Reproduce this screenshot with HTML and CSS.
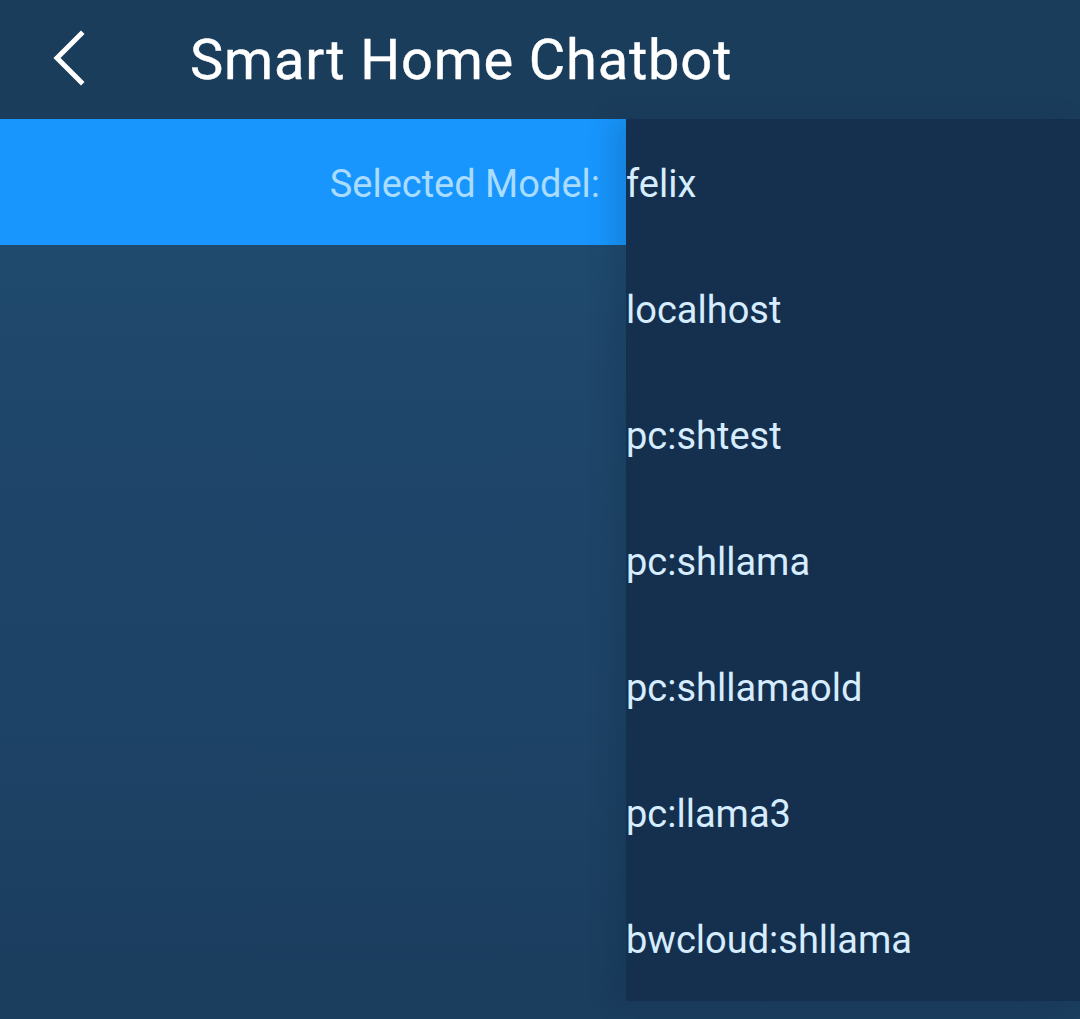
FILE: index.html
```html
<!DOCTYPE html>
<html>
<head>
<meta charset="utf-8">
<link rel="stylesheet" href="styles.css">
</head>
<body>
<div class="app">
  <header class="topbar">
    <button class="back" aria-label="Back">
      <svg width="40" height="60" viewBox="0 0 40 60"><polyline points="28,4 4,28 28,52" fill="none" stroke="#ffffff" stroke-width="5" stroke-linecap="square"/></svg>
    </button>
    <h1 class="title">Smart Home Chatbot</h1>
  </header>
  <main class="content">
    <div class="model-bar">
      <span class="model-label">Selected Model:</span>
    </div>
    <ul class="dropdown">
      <li class="option">felix</li>
      <li class="option">localhost</li>
      <li class="option">pc:shtest</li>
      <li class="option">pc:shllama</li>
      <li class="option">pc:shllamaold</li>
      <li class="option">pc:llama3</li>
      <li class="option">bwcloud:shllama</li>
    </ul>
  </main>
</div>
</body>
</html>
```
FILE: styles.css
```css
html, body {
  margin: 0;
  padding: 0;
  height: 100%;
}
body {
  background: linear-gradient(180deg, #1e5073 0%, #1f476b 35%, #1d4366 70%, #1b3d5e 100%);
  font-family: Roboto, "Noto Sans", sans-serif;
  overflow: hidden;
}
.app {
  height: 1019px;
  display: flex;
  flex-direction: column;
}
.topbar {
  height: 119px;
  background: #1b3d5c;
  display: flex;
  align-items: center;
  flex-shrink: 0;
}
.back {
  background: none;
  border: 0;
  padding: 0;
  margin-left: 53px;
  width: 40px;
  height: 60px;
  display: flex;
  align-items: center;
  justify-content: center;
}
.title {
  margin: 0 0 0 97px;
  color: #ffffff;
  font-family: Roboto, sans-serif;
  font-weight: 400;
  font-size: 56px;
  letter-spacing: 0.8px;
  line-height: 1;
  -webkit-text-stroke: 0.4px #ffffff;
}
.content {
  position: relative;
  flex: 1;
}
.model-bar {
  width: 626px;
  height: 126px;
  background: #1896fd;
  display: flex;
  align-items: center;
  justify-content: flex-end;
  box-sizing: border-box;
  padding-right: 26px;
  padding-top: 4px;
}
.model-label {
  color: #a9dcff;
  font-size: 38px;
}
.dropdown {
  position: absolute;
  top: 0;
  left: 626px;
  right: 0;
  margin: 0;
  padding: 0;
  list-style: none;
  background: #15304e;
  box-shadow: -14px 0 24px rgba(10, 30, 50, 0.15);
}
.option {
  height: 126px;
  box-sizing: border-box;
  padding-top: 4px;
  display: flex;
  align-items: center;
  color: #d6ecff;
  font-size: 38px;
}
```
